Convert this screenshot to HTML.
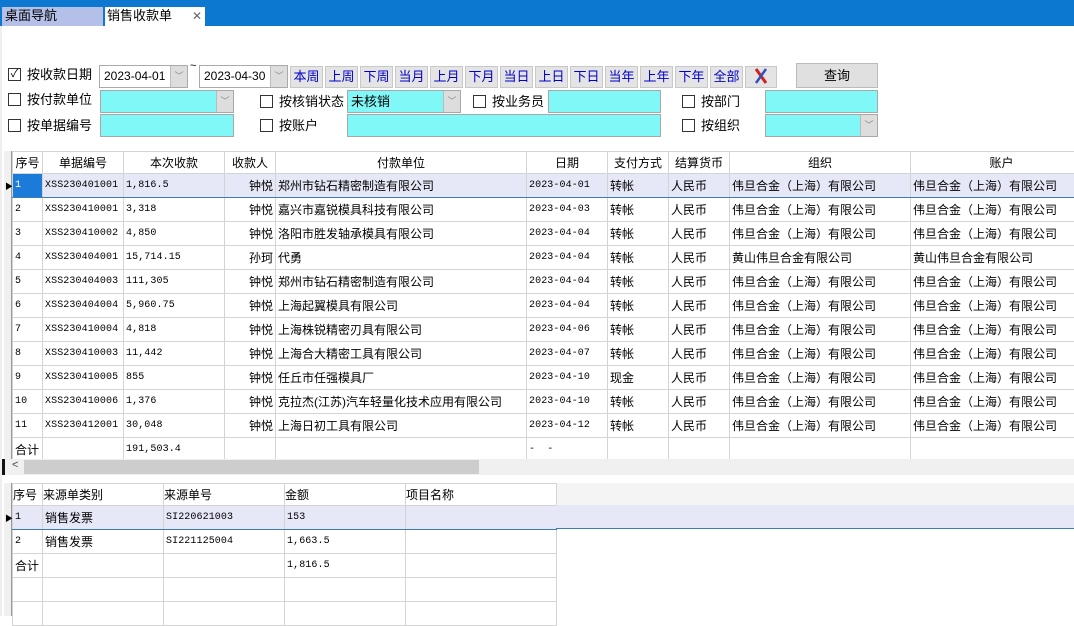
<!DOCTYPE html>
<html><head><meta charset="utf-8"><style>
*{box-sizing:border-box;margin:0;padding:0}
body{width:1074px;height:616px;overflow:hidden;background:#fff;font-family:"Liberation Sans","Noto Sans CJK SC",sans-serif;font-size:12px;color:#000;position:relative}
.a{position:absolute}
.cb{position:absolute;width:13px;height:13px;border:1px solid #333;background:#fff}
.lb{position:absolute;font-size:13px;line-height:16px}
.cy{position:absolute;background:#80f8f8;border:1px solid #a8a8a8}
.dd{position:absolute;background:#ddd;border-left:1px solid #bbb;top:0;bottom:0;right:0;width:17px;color:#888;font-size:9px;text-align:center;line-height:20px}
.btn{position:absolute;top:66px;width:33px;height:22px;background:#e4e4e4;border:1px solid #c8c8c8;color:#0000c8;font-size:13px;text-align:center;line-height:20px}
table{position:absolute;border-collapse:collapse;table-layout:fixed}
td{border:1px solid #d4d4d4;height:24px;padding:0 2px;white-space:nowrap;overflow:hidden;font-size:12px}
.m{font-family:"Liberation Mono","Noto Sans CJK SC",monospace;font-size:10px;letter-spacing:0.1px}
th{font-weight:normal;border:1px solid #d4d4d4;height:22px;background:#fff;font-size:12px}
.sel td{background:#e6e8f8;border-bottom:1px solid #3c7ab8}
.r{text-align:right}
</style></head><body>
<div class="a" style="left:0;top:0;width:1074px;height:26px;background:#0c78d0"></div>
<div class="a" style="left:2px;top:7px;width:101px;height:19px;background:#b4c0e8;font-size:13px;line-height:18px;padding-left:3px">桌面导航</div>
<div class="a" style="left:105px;top:7px;width:100px;height:19px;background:#fff;font-size:13px;line-height:18px;padding-left:2px">销售收款单<span style="position:absolute;left:87px;top:0;color:#666;font-size:12px">✕</span></div>
<div class="a" style="left:0;top:26px;width:2px;height:590px;background:#eee"></div>

<div class="cb" style="left:8px;top:68px;font-size:11px;line-height:11px;text-align:center">✓</div><div class="lb" style="left:27px;top:67px">按收款日期</div>
<div class="a" style="left:99px;top:65px;width:89px;height:23px;border:1px solid #aaa;font-size:12px;line-height:21px;padding-left:4px">2023-04-01<div class="dd">﹀</div></div>
<div class="a" style="left:190px;top:60px;font-size:11px">~</div>
<div class="a" style="left:199px;top:65px;width:89px;height:23px;border:1px solid #aaa;font-size:12px;line-height:21px;padding-left:4px">2023-04-30<div class="dd">﹀</div></div>
<div class="btn" style="left:290px">本周</div><div class="btn" style="left:325px">上周</div><div class="btn" style="left:360px">下周</div><div class="btn" style="left:395px">当月</div><div class="btn" style="left:430px">上月</div><div class="btn" style="left:465px">下月</div><div class="btn" style="left:500px">当日</div><div class="btn" style="left:535px">上日</div><div class="btn" style="left:570px">下日</div><div class="btn" style="left:605px">当年</div><div class="btn" style="left:640px">上年</div><div class="btn" style="left:675px">下年</div><div class="btn" style="left:710px">全部</div>
<div class="btn" style="left:745px;width:32px"><svg width="20" height="18" viewBox="0 0 20 18"><path d="M5 2L15 16" stroke="#d02020" stroke-width="3"/><path d="M15 2L5 16" stroke="#3050c0" stroke-width="2.5"/></svg></div>
<div class="a" style="left:796px;top:63px;width:82px;height:25px;background:#e0e0e0;border:1px solid #bbb;text-align:center;line-height:23px;font-size:13px">查询</div>

<div class="cb" style="left:8px;top:93px"></div><div class="lb" style="left:27px;top:92px">按付款单位</div>
<div class="cy" style="left:100px;top:90px;width:134px;height:23px"><div class="dd" style="background:#ddd">﹀</div></div>
<div class="cb" style="left:260px;top:95px"></div><div class="lb" style="left:279px;top:94px">按核销状态</div>
<div class="cy" style="left:347px;top:90px;width:114px;height:23px;font-size:13px;line-height:21px;padding-left:3px">未核销<div class="dd">﹀</div></div>
<div class="cb" style="left:473px;top:95px"></div><div class="lb" style="left:492px;top:94px">按业务员</div>
<div class="cy" style="left:548px;top:90px;width:113px;height:23px"></div>
<div class="cb" style="left:682px;top:95px"></div><div class="lb" style="left:701px;top:94px">按部门</div>
<div class="cy" style="left:765px;top:90px;width:113px;height:23px"></div>

<div class="cb" style="left:8px;top:119px"></div><div class="lb" style="left:27px;top:118px">按单据编号</div>
<div class="cy" style="left:100px;top:114px;width:134px;height:23px"></div>
<div class="cb" style="left:260px;top:119px"></div><div class="lb" style="left:279px;top:118px">按账户</div>
<div class="cy" style="left:347px;top:114px;width:314px;height:23px"></div>
<div class="cb" style="left:682px;top:119px"></div><div class="lb" style="left:701px;top:118px">按组织</div>
<div class="cy" style="left:765px;top:114px;width:113px;height:23px"><div class="dd">﹀</div></div>

<div class="a" style="left:4px;top:151px;width:8px;height:308px;background:#f0f0f0;border-right:1px solid #999"></div>
<div class="a" style="left:5px;top:181px;font-size:8px">▶</div>
<table style="left:12px;top:151px;width:1080px">
<colgroup><col style="width:30px"><col style="width:81px"><col style="width:101px"><col style="width:51px"><col style="width:251px"><col style="width:81px"><col style="width:61px"><col style="width:61px"><col style="width:181px"><col style="width:182px"></colgroup>
<tr><th>序号</th><th>单据编号</th><th>本次收款</th><th>收款人</th><th>付款单位</th><th>日期</th><th>支付方式</th><th>结算货币</th><th>组织</th><th>账户</th></tr>
<tr class="sel"><td class="m" style="background:#1c7ad8;color:#fff">1</td><td class="m">XSS230401001</td><td class="m">1,816.5</td><td class="r">钟悦</td><td>郑州市钻石精密制造有限公司</td><td class="m">2023-04-01</td><td>转帐</td><td>人民币</td><td>伟旦合金（上海）有限公司</td><td>伟旦合金（上海）有限公司</td></tr>
<tr><td class="m">2</td><td class="m">XSS230410001</td><td class="m">3,318</td><td class="r">钟悦</td><td>嘉兴市嘉锐模具科技有限公司</td><td class="m">2023-04-03</td><td>转帐</td><td>人民币</td><td>伟旦合金（上海）有限公司</td><td>伟旦合金（上海）有限公司</td></tr>
<tr><td class="m">3</td><td class="m">XSS230410002</td><td class="m">4,850</td><td class="r">钟悦</td><td>洛阳市胜发轴承模具有限公司</td><td class="m">2023-04-04</td><td>转帐</td><td>人民币</td><td>伟旦合金（上海）有限公司</td><td>伟旦合金（上海）有限公司</td></tr>
<tr><td class="m">4</td><td class="m">XSS230404001</td><td class="m">15,714.15</td><td class="r">孙珂</td><td>代勇</td><td class="m">2023-04-04</td><td>转帐</td><td>人民币</td><td>黄山伟旦合金有限公司</td><td>黄山伟旦合金有限公司</td></tr>
<tr><td class="m">5</td><td class="m">XSS230404003</td><td class="m">111,305</td><td class="r">钟悦</td><td>郑州市钻石精密制造有限公司</td><td class="m">2023-04-04</td><td>转帐</td><td>人民币</td><td>伟旦合金（上海）有限公司</td><td>伟旦合金（上海）有限公司</td></tr>
<tr><td class="m">6</td><td class="m">XSS230404004</td><td class="m">5,960.75</td><td class="r">钟悦</td><td>上海起翼模具有限公司</td><td class="m">2023-04-04</td><td>转帐</td><td>人民币</td><td>伟旦合金（上海）有限公司</td><td>伟旦合金（上海）有限公司</td></tr>
<tr><td class="m">7</td><td class="m">XSS230410004</td><td class="m">4,818</td><td class="r">钟悦</td><td>上海株锐精密刃具有限公司</td><td class="m">2023-04-06</td><td>转帐</td><td>人民币</td><td>伟旦合金（上海）有限公司</td><td>伟旦合金（上海）有限公司</td></tr>
<tr><td class="m">8</td><td class="m">XSS230410003</td><td class="m">11,442</td><td class="r">钟悦</td><td>上海合大精密工具有限公司</td><td class="m">2023-04-07</td><td>转帐</td><td>人民币</td><td>伟旦合金（上海）有限公司</td><td>伟旦合金（上海）有限公司</td></tr>
<tr><td class="m">9</td><td class="m">XSS230410005</td><td class="m">855</td><td class="r">钟悦</td><td>任丘市任强模具厂</td><td class="m">2023-04-10</td><td>现金</td><td>人民币</td><td>伟旦合金（上海）有限公司</td><td>伟旦合金（上海）有限公司</td></tr>
<tr><td class="m">10</td><td class="m">XSS230410006</td><td class="m">1,376</td><td class="r">钟悦</td><td>克拉杰(江苏)汽车轻量化技术应用有限公司</td><td class="m">2023-04-10</td><td>转帐</td><td>人民币</td><td>伟旦合金（上海）有限公司</td><td>伟旦合金（上海）有限公司</td></tr>
<tr><td class="m">11</td><td class="m">XSS230412001</td><td class="m">30,048</td><td class="r">钟悦</td><td>上海日初工具有限公司</td><td class="m">2023-04-12</td><td>转帐</td><td>人民币</td><td>伟旦合金（上海）有限公司</td><td>伟旦合金（上海）有限公司</td></tr>
<tr><td style="height:22px">合计</td><td></td><td class="m">191,503.4</td><td></td><td></td><td class="m">-&nbsp; -</td><td></td><td></td><td></td><td></td></tr>
</table>
<div class="a" style="left:2px;top:459px;width:1072px;height:16px;background:#f0f0f0"></div>
<div class="a" style="left:2px;top:459px;width:3px;height:16px;background:#111"></div>
<div class="a" style="left:12px;top:459px;font-size:11px;color:#444">&lt;</div>
<div class="a" style="left:24px;top:460px;width:455px;height:14px;background:#cdcdcd"></div>

<div class="a" style="left:4px;top:483px;width:8px;height:133px;background:#f0f0f0;border-right:1px solid #999"></div>
<div class="a" style="left:5px;top:513px;font-size:8px">▶</div>
<div class="a" style="left:556px;top:483px;width:518px;height:22px;background:#f4f4f4"></div>
<table style="left:12px;top:483px;width:544px">
<colgroup><col style="width:30px"><col style="width:121px"><col style="width:121px"><col style="width:121px"><col style="width:151px"></colgroup>
<tr><th style="text-align:left">序号</th><th style="text-align:left">来源单类别</th><th style="text-align:left">来源单号</th><th style="text-align:left">金额</th><th style="text-align:left">项目名称</th></tr>
<tr class="sel"><td class="m">1</td><td>销售发票</td><td class="m">SI220621003</td><td class="m">153</td><td></td></tr>
<tr><td class="m">2</td><td>销售发票</td><td class="m">SI221125004</td><td class="m">1,663.5</td><td></td></tr>
<tr><td>合计</td><td></td><td></td><td class="m">1,816.5</td><td></td></tr>
<tr><td></td><td></td><td></td><td></td><td></td></tr>
<tr><td></td><td></td><td></td><td></td><td></td></tr>
</table>
<div class="a" style="left:556px;top:505px;width:518px;height:24px;background:#e6e8f8;border-bottom:1px solid #3c7ab8"></div>
</body></html>
